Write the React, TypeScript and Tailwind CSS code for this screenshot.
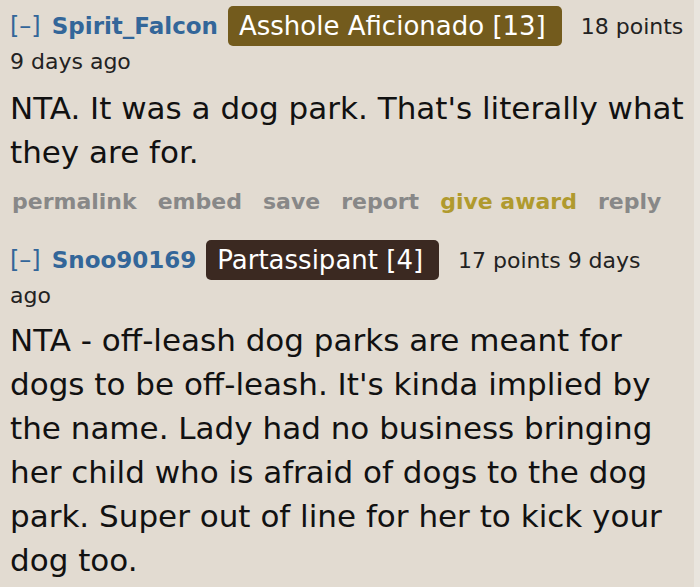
const font = "font-['DejaVu_Sans',Verdana,sans-serif]";

function Flair({ text, tone }: { text: string; tone: string }) {
  return (
    <span
      className={`inline-block rounded-[5px] pl-[11px] pr-[16px] text-[26px] leading-[40px] text-white align-middle ${tone}`}
    >
      {text}
    </span>
  );
}

function Header({
  user,
  flair,
  tone,
  first,
  second,
}: {
  user: string;
  flair: string;
  tone: string;
  first: string;
  second: string;
}) {
  return (
    <div className="text-[22px] text-[#222]">
      <div className="flex items-center h-[40px] whitespace-nowrap">
        <span className="text-[24px] text-[#336699]">[–]</span>
        <span className="ml-[11px] text-[23px] font-bold text-[#336699]">{user}</span>
        <span className="ml-[10px]">
          <Flair text={flair} tone={tone} />
        </span>
        <span className="ml-[19px]">{first}</span>
      </div>
      <div className="leading-[32px]">{second}</div>
    </div>
  );
}

export default function App() {
  return (
    <div className={`flex w-[700px] h-[587px] overflow-hidden bg-[#e2dbd1] ${font}`}>
      <div className="w-[694px] shrink-0 pl-[10px]">
        <div className="pt-[6px]">
          <Header
            user="Spirit_Falcon"
            flair="Asshole Aficionado [13]"
            tone="bg-[#735b1d]"
            first="18 points"
            second="9 days ago"
          />
          <div className="mt-[8px] text-[31px] leading-[44px] text-[#111] whitespace-nowrap">
            <p>NTA. It was a dog park. That's literally what</p>
            <p>they are for.</p>
          </div>
          <div className="mt-[12px] flex gap-[21px] pl-[2px] text-[22px] font-bold leading-[32px] text-[#888888]">
            <span>permalink</span>
            <span>embed</span>
            <span>save</span>
            <span>report</span>
            <span className="text-[#b09a2e]">give award</span>
            <span>reply</span>
          </div>
        </div>
        <div className="pt-[22px]">
          <Header
            user="Snoo90169"
            flair="Partassipant [4]"
            tone="bg-[#3b2921]"
            first="17 points 9 days"
            second="ago"
          />
          <div className="mt-[6px] text-[31px] leading-[44px] text-[#111] whitespace-nowrap">
            <p>NTA - off-leash dog parks are meant for</p>
            <p>dogs to be off-leash. It's kinda implied by</p>
            <p>the name. Lady had no business bringing</p>
            <p>her child who is afraid of dogs to the dog</p>
            <p>park. Super out of line for her to kick your</p>
            <p>dog too.</p>
          </div>
        </div>
      </div>
      <div className="flex-1 bg-[#e9e5de]" />
    </div>
  );
}
